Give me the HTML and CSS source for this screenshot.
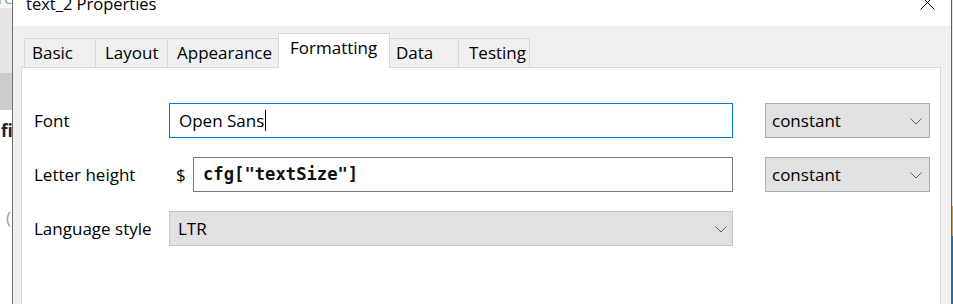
FILE: index.html
```html
<!DOCTYPE html>
<html>
<head>
<meta charset="utf-8">
<link rel="stylesheet" href="styles.css">
</head>
<body>
<div class="screen">
  <div class="bgwin">
    <div class="bg-top"><span class="bg-re">re</span></div>
    <div class="bg-band1"></div>
    <div class="bg-band2"></div>
    <div class="bg-white">
      <span class="bg-fig">fig</span>
      <span class="bg-paren">(</span>
    </div>
  </div>
  <div class="dialog">
    <div class="titlebar">
      <span class="title">text_2 Properties</span>
      <svg class="close" width="15" height="15" viewBox="0 0 15 15"><path d="M0.5 0.5 L14.5 14.5 M14.5 0.5 L0.5 14.5" stroke="#000" stroke-width="1" fill="none"/></svg>
    </div>
    <div class="body">
      <div class="tabs">
        <div class="tab t-basic">Basic</div>
        <div class="tab t-layout">Layout</div>
        <div class="tab t-appearance">Appearance</div>
        <div class="tab t-formatting active">Formatting</div>
        <div class="tab t-data">Data</div>
        <div class="tab t-testing">Testing</div>
      </div>
      <div class="panel">
        <div class="form">
          <div class="label">Font</div>
          <div class="input focused">Open Sans<span class="caret"></span></div>
          <div class="select side">constant<svg class="chev" width="12" height="7" viewBox="0 0 12 7"><polyline points="0.5,0.5 6,6 11.5,0.5" fill="none" stroke="#606060" stroke-width="1"/></svg></div>

          <div class="label">Letter height</div>
          <div class="expr">
            <span class="dollar">$</span>
            <div class="input code">cfg["textSize"]</div>
          </div>
          <div class="select side">constant<svg class="chev" width="12" height="7" viewBox="0 0 12 7"><polyline points="0.5,0.5 6,6 11.5,0.5" fill="none" stroke="#606060" stroke-width="1"/></svg></div>

          <div class="label">Language style</div>
          <div class="select wide">LTR<svg class="chev" width="12" height="7" viewBox="0 0 12 7"><polyline points="0.5,0.5 6,6 11.5,0.5" fill="none" stroke="#606060" stroke-width="1"/></svg></div>
        </div>
      </div>
    </div>
  </div>
  <div class="edge">
    <div class="edge-a"></div>
    <div class="edge-b"></div>
    <div class="edge-c"></div>
  </div>
</div>
</body>
</html>
```

FILE: styles.css
```css
* { box-sizing: border-box; }
html, body {
  margin: 0;
  padding: 0;
  background: #ffffff;
}
body {
  font-family: "Open Sans", "Noto Sans", sans-serif;
  font-size: 17px;
  color: #000;
}
.screen {
  width: 953px;
  height: 304px;
  overflow: hidden;
  display: flex;
}

/* background window strip */
.bgwin {
  width: 12px;
  flex: none;
  display: flex;
  flex-direction: column;
  overflow: hidden;
}
.bg-top {
  height: 8px;
  background: #f7f7f7;
  overflow: hidden;
}
.bg-re {
  display: block;
  margin-top: -10px;
  margin-left: -2px;
  font-size: 15px;
  color: #9a9a9a;
  line-height: 16px;
}
.bg-band1 { height: 65px; background: #e6e6e6; }
.bg-band2 { height: 37px; background: #cccccc; }
.bg-white {
  flex: 1;
  background: #ffffff;
  display: flex;
  flex-direction: column;
}
.bg-fig {
  margin-top: 12px;
  margin-left: 1px;
  font-weight: bold;
  font-size: 17px;
  line-height: 18px;
  color: #1d1d3a;
  white-space: nowrap;
}
.bg-paren {
  margin-top: 68px;
  margin-left: 6px;
  font-size: 17px;
  line-height: 20px;
  color: #8fa0b8;
}

/* dialog */
.dialog {
  width: 940px;
  flex: none;
  border-left: 1px solid #6e6e6e;
  border-right: 1px solid #5e5e5e;
  display: flex;
  flex-direction: column;
}
.titlebar {
  height: 26px;
  background: #ffffff;
  display: flex;
  justify-content: space-between;
  align-items: flex-start;
  padding-left: 13px;
  padding-right: 16px;
  overflow: hidden;
}
.title {
  font-size: 16.5px;
  line-height: 20px;
  margin-top: -6px;
  white-space: nowrap;
}
.close {
  margin-top: -5px;
  display: block;
}
.body {
  flex: 1;
  background: #f0f0f0;
  padding-left: 8px;
  padding-right: 10px;
  display: flex;
  flex-direction: column;
}
.tabs {
  height: 41px;
  display: flex;
  align-items: flex-end;
  padding-left: 3px;
  position: relative;
  z-index: 1;
}
.tab {
  height: 29px;
  border-top: 1px solid #d9d9d9;
  border-left: 1px solid #d9d9d9;
  background: #f0f0f0;
  white-space: nowrap;
  line-height: 27px;
  flex: none;
}
.t-basic { width: 71px; padding-left: 7px; }
.t-layout { width: 72px; padding-left: 9px; }
.t-appearance { width: 111px; padding-left: 9px; }
.t-formatting { width: 112px; padding-left: 11px; }
.t-data { width: 68px; padding-left: 6px; border-left: none; }
.t-testing { width: 72px; padding-left: 10px; border-right: 1px solid #d9d9d9; }
.tab.active {
  height: 35px;
  margin-bottom: -1px;
  background: #ffffff;
  border-right: 1px solid #d9d9d9;
  line-height: 28px;
}
.panel {
  flex: 1;
  background: #ffffff;
  border: 1px solid #d9d9d9;
  border-bottom: none;
  padding-top: 35px;
  padding-left: 12px;
}
.form {
  display: grid;
  grid-template-columns: 135px 564px 32px 165px;
  grid-auto-rows: 35px;
  row-gap: 19px;
  align-items: stretch;
}
.label {
  grid-column: 1;
  display: flex;
  align-items: center;
  white-space: nowrap;
  padding-bottom: 1px;
}
.input {
  border: 1px solid #7a7a7a;
  background: #fff;
  display: flex;
  align-items: center;
  padding-left: 9px;
  padding-bottom: 1px;
  white-space: nowrap;
}
.input.focused {
  border-color: #0078d7;
}
.caret {
  display: inline-block;
  width: 1px;
  height: 21px;
  background: #000;
  margin-left: 1px;
}
.expr {
  display: flex;
  align-items: stretch;
}
.dollar {
  width: 24px;
  flex: none;
  padding-left: 7px;
  display: flex;
  align-items: center;
  padding-bottom: 1px;
}
.input.code {
  flex: 1;
  font-family: "DejaVu Sans Mono", "Liberation Mono", monospace;
  font-weight: bold;
  font-size: 17.2px;
  color: #111;
}
.select {
  background: #e1e1e1;
  border: 1px solid #adadad;
  display: flex;
  align-items: center;
  justify-content: space-between;
  padding-left: 6px;
  padding-right: 7px;
  padding-bottom: 1px;
  white-space: nowrap;
}
.select.side {
  grid-column: 4;
}
.select.wide {
  grid-column: 2;
  border-color: #c6c6c6;
  padding-left: 8px;
  padding-right: 5px;
}
.chev {
  display: block;
  flex: none;
  margin-top: 2px;
}

/* right edge */
.edge {
  width: 1px;
  flex: none;
  display: flex;
  flex-direction: column;
}
.edge-a { height: 206px; background: #e8e8e8; }
.edge-b { height: 30px; background: #c89a5a; }
.edge-c { flex: 1; background: #1f6fb3; }
```
